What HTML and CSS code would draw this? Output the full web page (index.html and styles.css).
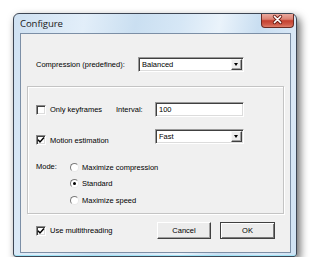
FILE: index.html
```html
<!DOCTYPE html>
<html>
<head>
	<title>Configure</title>
	<link rel="stylesheet" href="styles.css">
</head>
<body>
	<div class="window">
		<div class="titlebar">
			<span class="title">Configure</span>
			<div class="close">
				<svg width="33" height="14" viewBox="0 0 33 14">
					<path d="M13.5 3.5 L19.5 9.5 M19.5 3.5 L13.5 9.5" stroke="#6b1e16" stroke-width="3.4" stroke-linecap="round"/>
					<path d="M13.5 3.5 L19.5 9.5 M19.5 3.5 L13.5 9.5" stroke="#ffffff" stroke-width="1.7" stroke-linecap="round"/>
				</svg>
			</div>
		</div>

		<div class="client">
			<div class="row preset">
				<span class="preset-label">Compression (predefined):</span>
				<div class="combo preset-combo"><span class="value">Balanced</span><span class="drop"></span></div>
			</div>

			<div class="group">
				<div class="row keyrow">
					<label class="check keycheck"><span class="box"></span>Only keyframes</label>
					<span class="interval">Interval:</span>
					<div class="edit">100</div>
				</div>
				<div class="row motion">
					<label class="check motioncheck"><span class="box checked"><svg width="8" height="8" viewBox="0 0 8 8"><polyline points="1,3.8 3,6 7,1.6" fill="none" stroke="#000" stroke-width="1.5"/></svg></span>Motion estimation</label>
					<div class="combo"><span class="value">Fast</span><span class="drop"></span></div>
				</div>
				<div class="mode">
					<span class="mode-label">Mode:</span>
					<div class="radios">
						<label class="radio"><span class="dot"></span>Maximize compression</label>
						<label class="radio"><span class="dot on"></span>Standard</label>
						<label class="radio"><span class="dot"></span>Maximize speed</label>
					</div>
				</div>
			</div>

			<div class="row footer">
				<label class="check"><span class="box checked"><svg width="8" height="8" viewBox="0 0 8 8"><polyline points="1,3.8 3,6 7,1.6" fill="none" stroke="#000" stroke-width="1.5"/></svg></span>Use multithreading</label>
				<button class="btn cancel">Cancel</button>
				<button class="btn ok">OK</button>
			</div>
		</div>
	</div>
</body>
</html>
```

FILE: styles.css
```css
body { margin: 0; padding: 13px 0 0 13px; background: #ffffff; font-family: "Liberation Sans", Arial, sans-serif; font-size: 7.5px; color: #000000; }

/* Vista style frame */
.window {
    width: 284px;
    height: 244px;
    box-sizing: border-box;
    display: flex;
    flex-direction: column;
    padding: 0 5px 3px 6px;
    border: 1px solid #3d4654;
    border-radius: 6px 6px 3px 3px;
    background: linear-gradient(100deg, #cfe1f2 0%, #e2eef9 22%, #cadff1 38%, #d6e7f6 52%, #eaf3fb 64%, #c9def1 76%, #dbe9f7 90%, #cfe2f3 100%);
    box-shadow: 3px 4px 8px rgba(0, 0, 0, 0.6), inset 0 -1px 0 #9fe4f7;
}

.titlebar { height: 19px; display: flex; align-items: center; margin: 0 -5px 0 -6px; padding-left: 6px; }
.title { font-family: "Open Sans", "Liberation Sans", sans-serif; font-size: 9.6px; color: #1a1a1a; letter-spacing: -0.1px; }
.close {
    margin-left: auto;
    margin-right: 2px;
    align-self: flex-start;
    width: 33px;
    height: 14px;
    box-sizing: border-box;
    border: 1px solid #6a2a22;
    border-top: none;
    border-radius: 0 0 4px 4px;
    background: linear-gradient(#e9a99f 0%, #dc8273 40%, #c5402f 52%, #cf5a48 80%, #e07e6a 100%);
    overflow: hidden;
}
.close svg { display: block; margin: -1px 0 0 -1px; }

.client {
    flex: 1;
    display: flex;
    flex-direction: column;
    border: 1px solid #7c8fa6;
    background: #f0f0f0;
    padding: 0 6px;
}

.row { display: flex; align-items: center; }

.preset { margin-top: 23px; height: 15px; padding-left: 9px; }
.preset-label { width: 102px; }

/* sunken classic controls */
.combo, .edit {
    height: 15px;
    width: 89px;
    box-sizing: border-box;
    display: flex;
    align-items: center;
    background: #ffffff;
    border: 1px solid;
    border-color: #9a9a9a #ffffff #ffffff #9a9a9a;
    box-shadow: inset 1px 1px 0 #404040, inset -1px -1px 0 #dcdcdc;
    padding-left: 3px;
}
.combo.preset-combo { width: 106px; }
.combo .value { flex: 1; }
.drop {
    width: 11px;
    height: 11px;
    margin-right: 1px;
    box-sizing: border-box;
    background: #ececec;
    border: 1px solid;
    border-color: #f8f8f8 #404040 #404040 #f8f8f8;
    box-shadow: inset -1px -1px 0 #a0a0a0;
    position: relative;
}
.drop::after {
    content: "";
    position: absolute;
    left: 2px;
    top: 3px;
    border-left: 2.5px solid transparent;
    border-right: 2.5px solid transparent;
    border-top: 3px solid #000000;
}

.group {
    margin-top: 14px;
    height: 128px;
    box-sizing: border-box;
    border: 1px solid #c4c4c4;
    box-shadow: inset 1px 1px 0 #ffffff, 1px 1px 0 #ffffff;
    padding-left: 8px;
}

.check { display: flex; align-items: center; gap: 4px; }
.box {
    width: 10px;
    height: 10px;
    box-sizing: border-box;
    background: #ffffff;
    border: 1px solid;
    border-color: #8a8a8a #ffffff #ffffff #8a8a8a;
    box-shadow: inset 1px 1px 0 #404040, inset -1px -1px 0 #dcdcdc;
    display: flex;
    align-items: center;
    justify-content: center;
}
.box svg { display: block; }

.keyrow { margin-top: 15px; height: 15px; }
.keycheck { width: 80px; }
.interval { width: 39px; }

.motion { margin-top: 12px; height: 15px; align-items: flex-start; }
.motioncheck { width: 119px; margin-top: 6px; }

.mode { display: flex; margin-top: 15px; }
.mode-label { width: 34px; height: 16.5px; line-height: 16.5px; }
.radio { display: flex; align-items: center; gap: 3px; height: 16.5px; }
.dot {
    width: 9px;
    height: 9px;
    box-sizing: border-box;
    border-radius: 50%;
    background: #ffffff;
    border: 1px solid;
    border-color: #7a7a7a #e8e8e8 #e8e8e8 #7a7a7a;
    display: flex;
    align-items: center;
    justify-content: center;
}
.dot.on::after { content: ""; width: 3px; height: 3px; border-radius: 50%; background: #000000; }

.footer { margin-top: 8px; height: 17px; padding-left: 9px; padding-right: 9px; }
.footer .check { margin-right: auto; }

.btn {
    height: 17px;
    box-sizing: border-box;
    font-family: inherit;
    font-size: inherit;
    color: #000000;
    background: #ececec;
    border: 1px solid;
    border-color: #ffffff #404040 #404040 #ffffff;
    box-shadow: inset -1px -1px 0 #a0a0a0;
    padding: 0;
}
.cancel { width: 54px; margin-right: 9px; }
.ok { width: 55px; border-color: #404040; box-shadow: inset 1px 1px 0 #ffffff, inset -1px -1px 0 #7a7a7a; }
```
